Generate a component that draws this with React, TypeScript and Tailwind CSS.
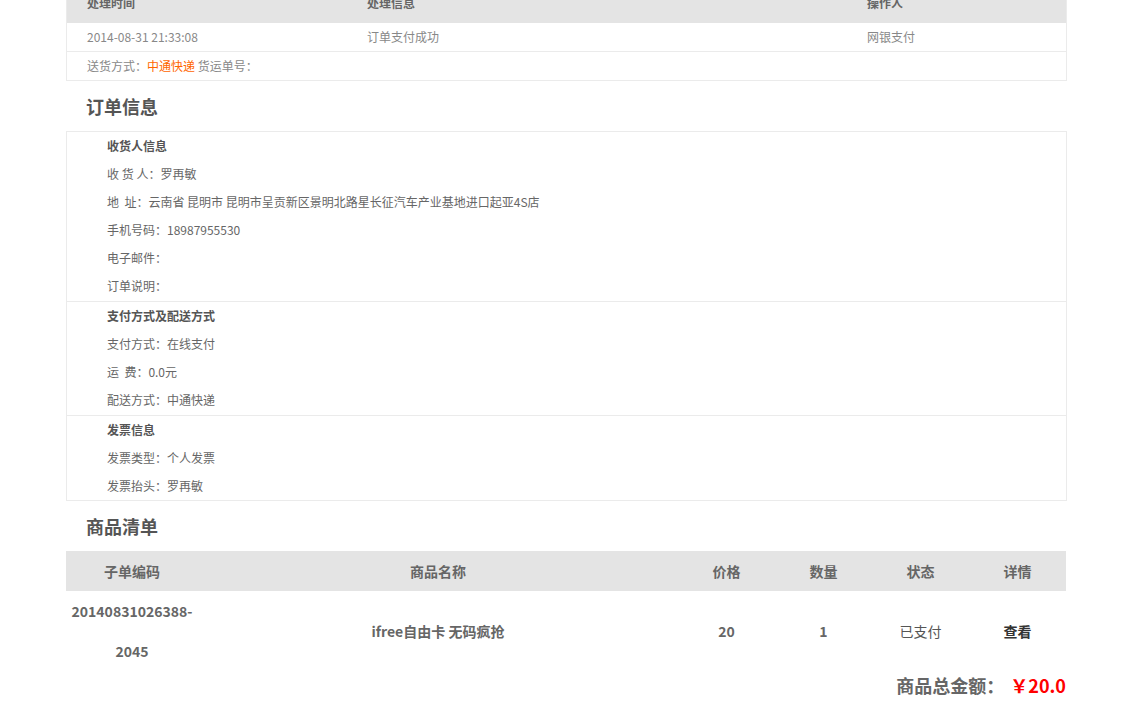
import React from "react";

const font = { fontFamily: '"Noto Sans CJK SC", "Noto Sans", sans-serif' };

function InfoLine({ children, bold }: { children: React.ReactNode; bold?: boolean }) {
  return (
    <div className={`h-[28px] leading-[28px] text-[12px] ${bold ? "font-bold text-[#555]" : "text-[#666]"}`}>
      {children}
    </div>
  );
}

export default function App() {
  return (
    <div className="bg-white w-[1124px] h-[707px] overflow-hidden" style={font}>
      <div className="-mt-[17px] ml-[66px] w-[1001px]">
        {/* process table */}
        <div className="border-x border-b border-[#ebebeb]">
          <div className="flex h-[40px] items-center bg-[#e4e4e4] text-[12px] font-bold text-[#666]">
            <div className="w-[280px] pl-[20px]">处理时间</div>
            <div className="w-[500px] pl-[20px]">处理信息</div>
            <div className="w-[200px] pl-[20px]">操作人</div>
          </div>
          <div className="flex h-[29px] items-center border-b border-[#ebebeb] text-[12px] text-[#888]">
            <div className="w-[280px] pl-[20px]">2014-08-31 21:33:08</div>
            <div className="w-[500px] pl-[20px]">订单支付成功</div>
            <div className="w-[200px] pl-[20px]">网银支付</div>
          </div>
          <div className="flex h-[28px] items-center pl-[20px] text-[12px] text-[#888]">
            送货方式：<span className="text-[#ff6600]">中通快递</span>&nbsp;货运单号：
          </div>
        </div>

        {/* order info */}
        <div className="h-[50px] flex items-center pl-[20px] text-[18px] font-bold text-[#555]">订单信息</div>
        <div className="border border-[#ebebeb]">
          <div className="pl-[40px] pb-[1px] border-b border-[#ebebeb]">
            <InfoLine bold>收货人信息</InfoLine>
            <InfoLine>收 货 人：罗再敏</InfoLine>
            <InfoLine>地&nbsp;&nbsp;址：云南省 昆明市 昆明市呈贡新区景明北路星长征汽车产业基地进口起亚4S店</InfoLine>
            <InfoLine>手机号码：18987955530</InfoLine>
            <InfoLine>电子邮件：</InfoLine>
            <InfoLine>订单说明：</InfoLine>
          </div>
          <div className="pl-[40px] pb-[1px] border-b border-[#ebebeb]">
            <InfoLine bold>支付方式及配送方式</InfoLine>
            <InfoLine>支付方式：在线支付</InfoLine>
            <InfoLine>运&nbsp;&nbsp;费：0.0元</InfoLine>
            <InfoLine>配送方式：中通快递</InfoLine>
          </div>
          <div className="pl-[40px]">
            <InfoLine bold>发票信息</InfoLine>
            <InfoLine>发票类型：个人发票</InfoLine>
            <InfoLine>发票抬头：罗再敏</InfoLine>
          </div>
        </div>

        {/* goods list */}
        <div className="h-[50px] flex items-center pl-[20px] text-[18px] font-bold text-[#555]">商品清单</div>
        <div className="w-[1000px]">
          <div className="flex h-[40px] items-center bg-[#e4e4e4] text-[14px] font-bold text-[#666]">
            <div className="w-[132px] text-center">子单编码</div>
            <div className="w-[480px] text-center">商品名称</div>
            <div className="w-[97px] text-center">价格</div>
            <div className="w-[97px] text-center">数量</div>
            <div className="w-[97px] text-center">状态</div>
            <div className="w-[97px] text-center">详情</div>
          </div>
          <div className="flex h-[80px] items-center text-[14px] font-bold text-[#666]">
            <div className="w-[132px] text-center leading-[40px]">
              <div className="whitespace-nowrap">20140831026388-</div>
              <div>2045</div>
            </div>
            <div className="w-[480px] text-center">ifree自由卡 无码疯抢</div>
            <div className="w-[97px] text-center">20</div>
            <div className="w-[97px] text-center">1</div>
            <div className="w-[97px] text-center font-normal text-[#555]">已支付</div>
            <div className="w-[97px] text-center text-[#333]">查看</div>
          </div>
          <div className="flex h-[28px] items-center justify-end text-[18px] font-bold">
            <span className="text-[#666]">商品总金额：</span>
            <span className="ml-[6px] text-[#ff0000]">￥20.0</span>
          </div>
        </div>
      </div>
    </div>
  );
}
